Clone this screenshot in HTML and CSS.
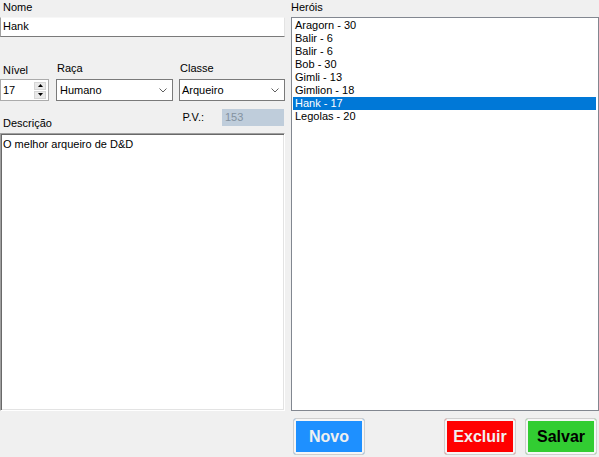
FILE: index.html
```html
<!DOCTYPE html>
<html lang="pt">
<head>
<meta charset="utf-8">
<title>Heróis</title>
<link rel="stylesheet" href="styles.css">
</head>
<body>
<div class="form">
  <div class="left">
    <span class="lbl lbl-nome">Nome</span>
    <div class="tb tb-nome">Hank</div>
    <div class="fields">
      <div class="field f-nivel">
        <span class="lbl">Nível</span>
        <div class="num">
          <span class="num-text">17</span>
          <span class="spin">
            <span class="spin-btn"><svg width="5" height="3" viewBox="0 0 5 3"><path d="M0 3 L2.5 0 L5 3 Z" fill="#000"/></svg></span>
            <span class="spin-btn"><svg width="5" height="3" viewBox="0 0 5 3"><path d="M0 0 L2.5 3 L5 0 Z" fill="#000"/></svg></span>
          </span>
        </div>
      </div>
      <div class="field f-raca">
        <span class="lbl">Raça</span>
        <div class="combo combo-raca"><span>Humano</span><svg width="8" height="5" viewBox="0 0 8 5"><path d="M0.5 0.5 L4 4 L7.5 0.5" fill="none" stroke="#606060"/></svg></div>
      </div>
      <div class="field f-classe">
        <span class="lbl">Classe</span>
        <div class="combo combo-classe"><span>Arqueiro</span><svg width="8" height="5" viewBox="0 0 8 5"><path d="M0.5 0.5 L4 4 L7.5 0.5" fill="none" stroke="#606060"/></svg></div>
      </div>
    </div>
    <div class="pvrow">
      <span class="lbl desc-lbl">Descrição</span>
      <div class="pv">
        <span class="lbl pv-lbl">P.V.:</span>
        <div class="pvbox">153</div>
      </div>
    </div>
    <div class="tb-desc">O melhor arqueiro de D&amp;D</div>
  </div>
  <div class="right">
    <span class="lbl lbl-herois">Heróis</span>
    <ul class="list">
      <li>Aragorn - 30</li>
      <li>Balir - 6</li>
      <li>Balir - 6</li>
      <li>Bob - 30</li>
      <li>Gimli - 13</li>
      <li>Gimlion - 18</li>
      <li class="sel">Hank - 17</li>
      <li>Legolas - 20</li>
    </ul>
    <div class="buttons">
      <button class="btn btn-novo">Novo</button>
      <span class="spacer"></span>
      <button class="btn btn-excluir">Excluir</button>
      <button class="btn btn-salvar">Salvar</button>
    </div>
  </div>
</div>
</body>
</html>
```

FILE: styles.css
```css
html, body {
  margin: 0;
  padding: 0;
  background: #f0f0f0;
}

body {
  font-family: "Liberation Sans", Arial, sans-serif;
  font-size: 11px;
  line-height: 13px;
  color: #000;
}

.form {
  display: flex;
  gap: 6px;
  width: 599px;
  height: 457px;
  overflow: hidden;
}

.left {
  width: 285px;
  display: flex;
  flex-direction: column;
}

.right {
  width: 308px;
  display: flex;
  flex-direction: column;
}

.lbl {
  display: block;
  height: 13px;
  white-space: nowrap;
}

.lbl-nome,
.lbl-herois {
  margin-top: 1px;
  padding-left: 3px;
}

.lbl-herois {
  padding-left: 0;
}

.tb {
  box-sizing: border-box;
  background: #fff;
}

.tb-nome {
  margin-top: 3px;
  height: 20px;
  padding: 2px 2px 0 2px;
  border-style: solid;
  border-width: 1px;
  border-color: #f7f7f7 #e3e3e3 #7a7a7a #a0a0a0;
}

.fields {
  display: flex;
  margin-top: 25px;
}

.field {
  display: flex;
  flex-direction: column;
}

.field .lbl {
  padding-left: 1px;
}

.f-nivel .lbl {
  padding-top: 2px;
  padding-left: 3px;
}

.f-nivel .num {
  margin-top: 2px;
}

.f-raca {
  margin-left: 7px;
}

.f-classe {
  margin-left: 6px;
}

.num,
.combo {
  box-sizing: border-box;
  height: 22px;
  margin-top: 4px;
  background: #fff;
  border: 1px solid #8a8a8a;
  display: flex;
  align-items: center;
}

.num {
  width: 49px;
  border-color: #ababab;
  padding-left: 2px;
  padding-right: 2px;
}

.num-text {
  flex: 1;
}

.spin {
  display: flex;
  flex-direction: column;
  gap: 1px;
  width: 12px;
}

.spin-btn {
  box-sizing: border-box;
  height: 8px;
  background: #e9e9e9;
  border: 1px solid #d6d6d6;
  display: flex;
  align-items: center;
  justify-content: center;
}

.combo {
  justify-content: space-between;
  padding: 0 5px 0 3px;
  border-color: #7a7a7a;
}

.combo-raca {
  width: 117px;
}

.combo-classe {
  width: 106px;
  padding-left: 2px;
}

.combo svg {
  margin-top: 1px;
}

.pvrow {
  display: flex;
  justify-content: space-between;
  height: 24px;
  margin-top: 8px;
}

.desc-lbl {
  align-self: flex-end;
  margin-bottom: 3px;
  padding-left: 3px;
}

.pv {
  display: flex;
  align-items: flex-start;
  gap: 18px;
  margin-right: 1px;
}

.pv-lbl {
  margin-top: 2px;
}

.pvbox {
  box-sizing: border-box;
  width: 62px;
  height: 17px;
  background: #bfcddb;
  color: #8392a0;
  padding: 2px 0 0 3px;
}

.tb-desc {
  box-sizing: border-box;
  height: 278px;
  background: #fff;
  border-style: solid;
  border-width: 1px;
  border-color: #a0a0a0 #ffffff #ffffff #a0a0a0;
  box-shadow: inset 1px 1px 0 #696969, inset -1px -1px 0 #e3e3e3;
  padding: 4px 2px 0 2px;
}

.list {
  box-sizing: border-box;
  list-style: none;
  margin: 3px 0 0 0;
  height: 394px;
  padding: 1px 2px 1px 1px;
  background: #fff;
  border: 1px solid #828790;
}

.list li {
  height: 13px;
  padding-left: 2px;
  white-space: nowrap;
}

.list li.sel {
  background: #0078d7;
  color: #fff;
}

.buttons {
  display: flex;
  gap: 9px;
  margin-top: 7px;
  padding: 0 2px;
}

.spacer {
  flex: 1;
  margin-left: -9px;
}

.btn {
  box-sizing: border-box;
  width: 72px;
  height: 37px;
  border: 1px solid #cfcfcf;
  border-radius: 3px;
  box-shadow: inset 0 0 0 2px #f6f6f6;
  font-family: "Liberation Sans", Arial, sans-serif;
  font-weight: bold;
  font-size: 16px;
  line-height: 18px;
  padding: 0;
  margin: 0;
}

.btn-novo {
  background: #1e90ff;
  color: #f0f0f0;
}

.btn-excluir {
  background: #ff0000;
  color: #f0f0f0;
}

.btn-salvar {
  background: #32cd32;
  color: #000;
}
```
